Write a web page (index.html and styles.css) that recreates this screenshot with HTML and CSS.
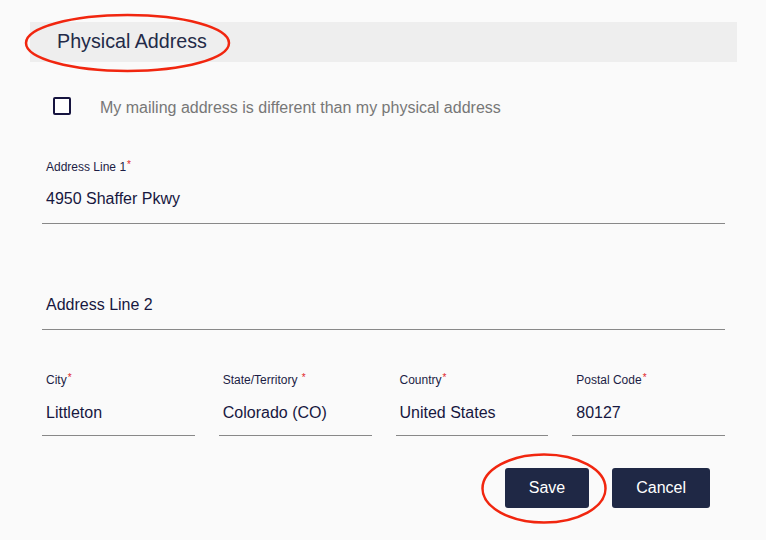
FILE: index.html
```html
<!DOCTYPE html>
<html lang="en">
<head>
<meta charset="utf-8">
<title>Physical Address</title>
<link rel="stylesheet" href="styles.css">
</head>
<body>
<div class="page">
  <div class="section-header"><h2 class="section-title">Physical Address</h2></div>

  <label class="check-row">
    <span class="checkbox"></span>
    <span class="check-label">My mailing address is different than my physical address</span>
  </label>

  <div class="fields">
    <div class="field">
      <div class="field-label">Address Line 1<span class="req">*</span></div>
      <div class="field-input">4950 Shaffer Pkwy</div>
    </div>

    <div class="field field-spaced">
      <div class="field-label"></div>
      <div class="field-input">Address Line 2</div>
    </div>

    <div class="field-row">
      <div class="field">
        <div class="field-label">City<span class="req">*</span></div>
        <div class="field-input">Littleton</div>
      </div>
      <div class="field">
        <div class="field-label">State/Territory <span class="req">*</span></div>
        <div class="field-input">Colorado (CO)</div>
      </div>
      <div class="field">
        <div class="field-label">Country<span class="req">*</span></div>
        <div class="field-input">United States</div>
      </div>
      <div class="field">
        <div class="field-label">Postal Code<span class="req">*</span></div>
        <div class="field-input">80127</div>
      </div>
    </div>

    <div class="actions">
      <button class="btn">Save</button>
      <button class="btn">Cancel</button>
    </div>
  </div>
</div>

<svg class="annotations" width="766" height="540" viewBox="0 0 766 540">
  <ellipse cx="127.5" cy="43" rx="101.5" ry="28" fill="none" stroke="#f1260f" stroke-width="2.5"/>
  <ellipse cx="544" cy="488.5" rx="61.5" ry="34" fill="none" stroke="#f1260f" stroke-width="2.5"/>
</svg>
</body>
</html>
```

FILE: styles.css
```css
* { box-sizing: border-box; }

html, body {
  margin: 0;
  padding: 0;
  background: #fafafa;
}

body {
  font-family: "Liberation Sans", Arial, sans-serif;
  color: #1a1a40;
  width: 766px;
  height: 540px;
  overflow: hidden;
  position: relative;
}

.page {
  padding: 22px 29px 0 30px;
}

.section-header {
  background: #eeeeee;
  height: 40px;
  display: flex;
  align-items: center;
  padding-left: 27px;
}

.section-title {
  margin: 0;
  font-size: 19.7px;
  font-weight: normal;
  color: #232a48;
  line-height: 1;
}

.check-row {
  display: flex;
  align-items: center;
  margin-top: 35px;
  padding-left: 23px;
  gap: 29px;
  height: 18px;
}

.checkbox {
  width: 18px;
  height: 18px;
  border: 2px solid #16143f;
  border-radius: 2px;
  background: #fff;
  flex: none;
}

.check-label {
  font-size: 16px;
  color: #777777;
  line-height: 18px;
  padding-top: 3px;
}

.fields {
  padding: 0 12px;
  margin-top: 42px;
}

.field-label {
  font-size: 12px;
  line-height: 15px;
  height: 15px;
  padding-left: 4px;
  color: #1c1d45;
}

.req {
  color: #e0262a;
  font-size: 10px;
  vertical-align: 3px;
  margin-left: 1px;
}

.field-input {
  font-size: 16px;
  line-height: 20px;
  padding: 17px 4px 14px;
  border-bottom: 1px solid #888888;
  color: #17173f;
}

.field-spaced {
  margin-top: 39px;
}

.field-row {
  display: grid;
  grid-template-columns: repeat(4, 1fr);
  column-gap: 24px;
  margin-top: 40px;
}

.field-row .field-input {
  padding-top: 18px;
  padding-bottom: 12px;
}

.actions {
  display: flex;
  justify-content: flex-end;
  gap: 23px;
  margin-top: 32px;
  padding-right: 15px;
}

.btn {
  height: 40px;
  padding: 0 24px;
  background: #1f2845;
  color: #ffffff;
  border: none;
  border-radius: 3px;
  font-family: "Liberation Sans", Arial, sans-serif;
  font-size: 16px;
  cursor: pointer;
}

.annotations {
  position: absolute;
  left: 0;
  top: 0;
  pointer-events: none;
}
```
